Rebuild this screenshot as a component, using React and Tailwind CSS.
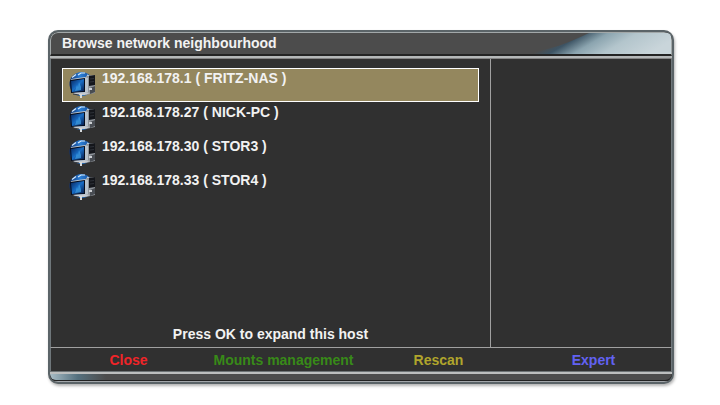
import { useState } from "react";

const hosts = [
  { ip: "192.168.178.1", name: "FRITZ-NAS" },
  { ip: "192.168.178.27", name: "NICK-PC" },
  { ip: "192.168.178.30", name: "STOR3" },
  { ip: "192.168.178.33", name: "STOR4" },
];

const actions = [
  { label: "Close", color: "text-[#f02428]" },
  { label: "Mounts management", color: "text-[#388a18]" },
  { label: "Rescan", color: "text-[#b0a52c]" },
  { label: "Expert", color: "text-[#6262f2]" },
];

function ComputerIcon() {
  return (
    <svg className="h-7 w-7 shrink-0" viewBox="0 0 28 28" aria-hidden="true">
      <defs>
        <linearGradient id="globe" x1="0" y1="0" x2="1" y2="0">
          <stop offset="0" stopColor="#0c2f72" />
          <stop offset="0.45" stopColor="#2b7fd6" />
          <stop offset="1" stopColor="#123f86" />
        </linearGradient>
        <linearGradient id="screen" x1="0" y1="0" x2="1" y2="1">
          <stop offset="0" stopColor="#08265f" />
          <stop offset="0.5" stopColor="#186cc4" />
          <stop offset="1" stopColor="#061a48" />
        </linearGradient>
      </defs>
      <circle cx="12.5" cy="13" r="12" fill="url(#globe)" />
      <path d="M3 6.5L7 3.5M9 4L12 2L16 2M18 4L20 5" fill="none" stroke="#d4e8f8" strokeWidth="1.2" />
      {/* tower */}
      <path d="M17 5L26 4V22L17 24Z" fill="#8f949a" />
      <path d="M20 5L26 4V14L20 15Z" fill="#14161b" />
      <path d="M21 8L25 7.5M21 11L25 10.5" stroke="#2d3138" />
      <path d="M21 17L26 15V21L21 23Z" fill="#484c52" />
      <path d="M20 17H23V19H20Z" fill="#cdd0d4" />
      {/* monitor */}
      <path d="M2 8L16 6L19 7V21L3 22Z" fill="#b9c3cc" />
      <path d="M1 9L16 7V21L2 22Z" fill="#050d1e" />
      <path d="M2 10L15 8V20L3 21Z" fill="url(#screen)" />
      <path d="M6 20L8 14L9 16L10 11L12 16V19Z" fill="#3f9fe6" opacity="0.7" />
      <path d="M4 22L16 21L21 22L16 24H7Z" fill="#c5c9ce" />
      <path d="M4 23L10 24" stroke="#33383f" />
      <path d="M11 23H13V27H11Z" fill="#d5d9dc" />
    </svg>
  );
}

function TitleGloss() {
  return (
    <svg className="h-full w-[150px]" viewBox="0 0 150 22" preserveAspectRatio="none" aria-hidden="true">
      <defs>
        <linearGradient id="gloss" gradientUnits="userSpaceOnUse" x1="47" y1="0" x2="79" y2="52">
          <stop offset="0" stopColor="#4c4c4c" />
          <stop offset="0.14" stopColor="#3d5464" />
          <stop offset="0.35" stopColor="#8ba4af" />
          <stop offset="0.6" stopColor="#b3c5cc" />
          <stop offset="1" stopColor="#c9d5da" />
        </linearGradient>
      </defs>
      <path d="M0 22C28 19 50 9 68 0H150V22Z" fill="url(#gloss)" />
    </svg>
  );
}

export default function App() {
  const [selected, setSelected] = useState(0);

  return (
    <div className="flex min-h-screen bg-white pt-[30px] pr-[46px] pb-[21px] pl-12 font-['Liberation_Sans',Arial,sans-serif] text-sm leading-5 font-bold text-[#f2f2f2]">
      <main className="flex flex-1 flex-col overflow-hidden rounded-[10px] border-2 border-[#5b6468] bg-[#303030] shadow-[1px_2px_3px_rgba(0,0,0,0.3)]">
        <header className="flex h-6 items-stretch justify-between rounded-t-lg border border-b-2 border-[#a2a8a9] border-b-[#242424] bg-[#4c4c4c]">
          <h1 className="pl-[11px]">Browse network neighbourhood</h1>
          <TitleGloss />
        </header>
        <div className="h-[3px] border-b border-[#858585] bg-[#b5b8b9]" />

        <div className="flex flex-1 border-x border-[#6f777b]">
          <section className="flex flex-1 flex-col justify-between pt-[9px] pr-[11px] pb-[3px] pl-[11px]">
            <ul>
              {hosts.map((host, i) => (
                <li key={host.ip}>
                  <button
                    type="button"
                    onClick={() => setSelected(i)}
                    className={`flex h-[34px] w-full items-start border pl-1.5 text-left leading-[18px] ${
                      i === selected ? "border-white bg-[#94875e]" : "border-transparent"
                    }`}
                  >
                    <span className="pt-0.5">
                      <ComputerIcon />
                    </span>
                    <span className="pl-[5px]">
                      {host.ip} ( {host.name} )
                    </span>
                  </button>
                </li>
              ))}
            </ul>
            <p className="text-center">Press OK to expand this host</p>
          </section>
          <aside className="w-[181px] border-l border-[#a0a0a0]" />
        </div>

        <footer>
          <nav className="grid h-6 grid-cols-4 border-x border-t border-[#6f777b] border-t-[#a0a0a0]">
            {actions.map((action) => (
              <button key={action.label} type="button" className={`whitespace-nowrap ${action.color}`}>
                {action.label}
              </button>
            ))}
          </nav>
          <div className="h-[3px] border-t border-[#6d7375] bg-[#bcbebe]" />
          <div className="flex h-[7px] rounded-b-lg border-b border-[#242424] bg-[#4c4c4c]">
            <div className="w-14 rounded-bl-lg bg-linear-to-r from-[#a9bdc6] via-[#54707e] to-[#4c4c4c]" />
          </div>
          <div className="h-px bg-[#a2a6aa]" />
        </footer>
      </main>
    </div>
  );
}
